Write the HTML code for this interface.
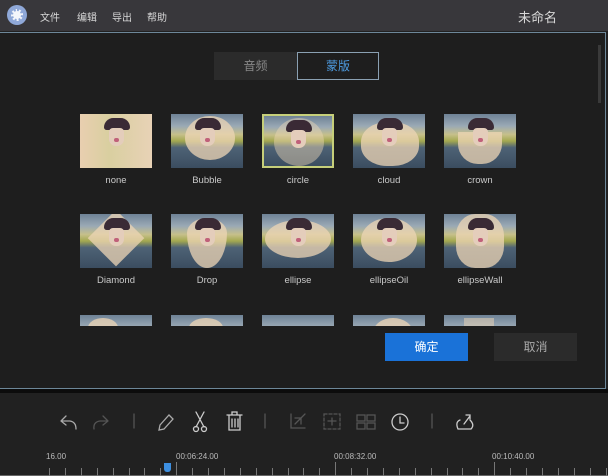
<!DOCTYPE html>
<html><head><meta charset="utf-8"><style>
*{margin:0;padding:0;box-sizing:border-box}
body{width:608px;height:476px;background:#212121;font-family:"Liberation Sans","Noto Sans CJK SC",sans-serif;position:relative;overflow:hidden;color:#ccc}
.top{position:absolute;left:0;top:0;width:608px;height:31px;background:#38373b}
.menu{position:absolute;top:9px;font-size:10px;color:#d8d8d8}
.dlg{position:absolute;left:0;top:32px;width:606px;height:357px;background:#1e1e1e;border:1px solid #6d8799;border-left:none}
.blk{position:absolute;left:0;top:389px;width:608px;height:4px;background:#0c0c0c}
.tab{position:absolute;top:52px;height:28px;font-size:12px;text-align:center;line-height:28px}
.th{position:absolute;width:72px;height:54px;overflow:hidden;background:linear-gradient(#6e8296 0%,#9aa9b5 22%,#c6c08a 38%,#a4a850 50%,#4e6275 62%,#3b4d60 100%)}
.m{position:absolute;background:#edd6b6;opacity:.75}
.h{position:absolute;left:24px;top:4px;width:26px;height:12px;background:#3a2a35;border-radius:10px 10px 3px 3px}
.f{position:absolute;left:29px;top:14px;width:15px;height:18px;background:#e4cdbb;border-radius:4px 4px 7px 7px}
.f:after{content:"";position:absolute;left:5px;top:10px;width:5px;height:4px;background:#c0607a;border-radius:2px}
.lb{position:absolute;width:72px;text-align:center;font-size:9.5px;color:#c9c9c9}
.btn{position:absolute;top:333px;width:83px;height:28px;font-size:12px;text-align:center;line-height:28px}
.tk{position:absolute;top:468px;width:1px;height:8px;background:#777}
.tt{position:absolute;top:452px;font-size:8px;color:#bbb}
</style></head><body>
<div class="top"></div>
<div style="position:absolute;left:7px;top:5px;width:20px;height:20px;border-radius:50%;background:#8fa8d8"></div>
<div style="position:absolute;left:11px;top:9px;width:12px;height:12px;border-radius:50%;background:#f4f6fb;border:2px dotted #8fa8d8"></div>
<div class="menu" style="left:40px">文件</div><div class="menu" style="left:77px">编辑</div><div class="menu" style="left:112px">导出</div><div class="menu" style="left:147px">帮助</div>
<div style="position:absolute;left:518px;top:7px;font-size:13px;color:#d8d8d8">未命名</div>
<div class="dlg"></div>
<div class="blk"></div>
<div style="position:absolute;left:598px;top:45px;width:3px;height:58px;background:#3a3a3a"></div>
<div class="tab" style="left:214px;width:83px;background:#2b2b2b;color:#888">音频</div>
<div class="tab" style="left:297px;width:82px;border:1px solid #8aa0b2;color:#4d9be0;line-height:26px">蒙版</div>

<div class="th" style="left:80px;top:114px;background:linear-gradient(90deg,#e9cfb0,#d9cfa0 40%,#e8d2b6)"><div class="h"></div><div class="f"></div></div>
<div class="th" style="left:171px;top:114px"><div class="m" style="left:14px;top:2px;width:50px;height:44px;border-radius:50%"></div><div class="h"></div><div class="f"></div></div>
<div class="th" style="left:262px;top:114px;border:2px solid #c6cf7a"><div class="m" style="left:10px;top:2px;width:50px;height:48px;border-radius:50%;opacity:.45"></div><div class="h" style="left:22px"></div><div class="f" style="left:27px"></div></div>
<div class="th" style="left:353px;top:114px"><div class="m" style="left:8px;top:8px;width:58px;height:44px;border-radius:45%"></div><div class="h"></div><div class="f"></div></div>
<div class="th" style="left:444px;top:114px"><div class="m" style="left:14px;top:18px;width:44px;height:32px;border-radius:0 0 20px 20px"></div><div class="h"></div><div class="f"></div></div>
<div class="lb" style="left:80px;top:175px">none</div><div class="lb" style="left:171px;top:175px">Bubble</div><div class="lb" style="left:262px;top:175px">circle</div><div class="lb" style="left:353px;top:175px">cloud</div><div class="lb" style="left:444px;top:175px">crown</div>
<div class="th" style="left:80px;top:214px"><div class="m" style="left:16px;top:-10px;width:40px;height:40px;transform:rotate(45deg) translate(10px,10px)"></div><div class="h"></div><div class="f"></div></div>
<div class="th" style="left:171px;top:214px"><div class="m" style="left:16px;top:4px;width:40px;height:50px;border-radius:50% 50% 50% 50%/30% 30% 70% 70%"></div><div class="h"></div><div class="f"></div></div>
<div class="th" style="left:262px;top:214px"><div class="m" style="left:3px;top:6px;width:66px;height:38px;border-radius:50%"></div><div class="h"></div><div class="f"></div></div>
<div class="th" style="left:353px;top:214px"><div class="m" style="left:8px;top:4px;width:56px;height:44px;border-radius:50%"></div><div class="h"></div><div class="f"></div></div>
<div class="th" style="left:444px;top:214px"><div class="m" style="left:12px;top:0;width:48px;height:54px;border-radius:40%"></div><div class="h"></div><div class="f"></div></div>
<div class="lb" style="left:80px;top:275px">Diamond</div><div class="lb" style="left:171px;top:275px">Drop</div><div class="lb" style="left:262px;top:275px">ellipse</div><div class="lb" style="left:353px;top:275px">ellipseOil</div><div class="lb" style="left:444px;top:275px">ellipseWall</div>
<div style="position:absolute;left:0;top:315px;width:600px;height:11px;overflow:hidden">
<div class="th" style="left:80px;top:0"><div class="m" style="left:8px;top:3px;width:30px;height:20px;border-radius:50%"></div></div>
<div class="th" style="left:171px;top:0"><div class="m" style="left:18px;top:3px;width:34px;height:20px;border-radius:50%"></div></div>
<div class="th" style="left:262px;top:0"></div>
<div class="th" style="left:353px;top:0"><div class="m" style="left:20px;top:3px;width:40px;height:30px;border-radius:50%"></div></div>
<div class="th" style="left:444px;top:0"><div class="m" style="left:20px;top:3px;width:30px;height:20px;opacity:.5"></div></div>
</div>
<div class="btn" style="left:385px;background:#1a72d8;color:#fff">确定</div>
<div class="btn" style="left:494px;background:#2b2b2b;color:#aaa">取消</div>

<svg style="position:absolute;left:0;top:400px" width="608" height="40" fill="none" stroke-width="1.3" stroke-linecap="round">
<path d="M61 21 L66 16 M61 21 L66 25 M61 21 H70 Q76 22 76 29" stroke="#aaa"/>
<path d="M108 21 L103 16 M108 21 L103 25 M108 21 H100 Q93 22 94 29" stroke="#555"/>
<line x1="134" y1="14" x2="134" y2="28" stroke="#555"/>
<path d="M159 30 L160 25 L169 15 L173 19 L164 29 Z" stroke="#aaa"/>
<path d="M196 12 L204 27 M204 12 L196 27" stroke="#ccc"/><circle cx="196" cy="29" r="2.5" stroke="#ccc"/><circle cx="204" cy="29" r="2.5" stroke="#ccc"/>
<path d="M227 15 H242 M232 15 V12 H237 V15 M229 15 V30 H240 V15 M232 19 V27 M235 19 V27 M238 19 V27" stroke="#ccc"/>
<line x1="265" y1="14" x2="265" y2="28" stroke="#555"/>
<path d="M291 14 V28 H305 M295 24 L305 14 M295 18 H301 V24" stroke="#555"/>
<rect x="324" y="14" width="16" height="15" stroke="#555" stroke-dasharray="3 2"/><path d="M332 18 V25 M328 21 H336" stroke="#555"/>
<rect x="357" y="15" width="8" height="6" stroke="#555"/><rect x="367" y="15" width="8" height="6" stroke="#555"/><rect x="357" y="23" width="8" height="6" stroke="#555"/><rect x="367" y="23" width="8" height="6" stroke="#555"/>
<circle cx="400" cy="22" r="8" stroke="#ccc"/><path d="M400 17 V23 H404" stroke="#ccc"/>
<line x1="432" y1="14" x2="432" y2="28" stroke="#555"/>
<path d="M460 20 Q455 22 458 29 H471 Q475 25 470 20 M464 24 L470 16 M466 15 H470 V19" stroke="#ccc"/>
</svg>
<div class="tt" style="left:46px">16.00</div>
<div class="tt" style="left:176px">00:06:24.00</div>
<div class="tt" style="left:334px">00:08:32.00</div>
<div class="tt" style="left:492px">00:10:40.00</div>
<div style="position:absolute;left:0;top:475px;width:608px;height:1px;background:#666"></div>
<div id="ticks"></div>
<div style="position:absolute;left:164px;top:463px;width:7px;height:9px;background:#3d8fe0;border-radius:0 0 3px 3px"></div>
<script>
var s="";for(var i=0;i<36;i++){var x=49+i*15.9;var maj=(i%10==8);s+='<div class="tk" style="left:'+x.toFixed(1)+'px;'+(maj?'top:462px;height:14px':'')+'"></div>';}
document.getElementById('ticks').innerHTML=s;
</script>
</body></html>
